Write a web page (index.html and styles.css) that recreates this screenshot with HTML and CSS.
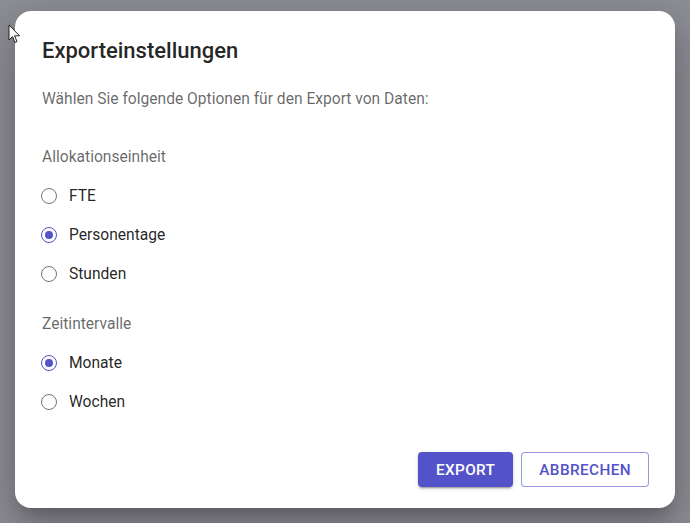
FILE: index.html
```html
<!DOCTYPE html>
<html lang="de">
<head>
  <meta charset="UTF-8">
  <meta name="viewport" content="width=device-width, initial-scale=1.0">
  <title>Exporteinstellungen</title>
  <link rel="stylesheet" href="styles.css">
</head>
<body>
  <div class="dialog">
    <h2 class="title">Exporteinstellungen</h2>
    <p class="intro">Wählen Sie folgende Optionen für den Export von Daten:</p>

    <div class="group">
      <div class="group-label">Allokationseinheit</div>
      <label class="option"><input type="radio" name="unit" value="fte"><span>FTE</span></label>
      <label class="option"><input type="radio" name="unit" value="pt" checked><span>Personentage</span></label>
      <label class="option"><input type="radio" name="unit" value="h"><span>Stunden</span></label>
    </div>

    <div class="group">
      <div class="group-label">Zeitintervalle</div>
      <label class="option"><input type="radio" name="interval" value="m" checked><span>Monate</span></label>
      <label class="option"><input type="radio" name="interval" value="w"><span>Wochen</span></label>
    </div>

    <div class="actions">
      <button class="btn btn-primary">Export</button>
      <button class="btn btn-outline">Abbrechen</button>
    </div>
  </div>

  <svg class="cursor" width="13" height="20" viewBox="0 0 13 20">
    <path d="M1 1 L1 16 L4.5 12.5 L7 18.5 L9 17.6 L6.6 11.8 L11.5 11.8 Z" fill="#fff" stroke="#222" stroke-width="1"/>
  </svg>
</body>
</html>
```

FILE: styles.css
```css
body {
  margin: 0;
  height: 523px;
  overflow: hidden;
  background: #8e8e96;
  font-family: Roboto, "Noto Sans", sans-serif;
  position: relative;
}

.dialog {
  box-sizing: border-box;
  width: 660px;
  height: 497px;
  margin: 11px 0 0 15px;
  padding: 24px 26px 21px 27px;
  background: #fff;
  border-radius: 16px;
  box-shadow: 0 11px 15px -7px rgba(0,0,0,0.2), 0 24px 38px 3px rgba(0,0,0,0.14), 0 9px 46px 8px rgba(0,0,0,0.12);
  display: flex;
  flex-direction: column;
}

.title {
  margin: 0;
  font-size: 22px;
  font-weight: 500;
  line-height: 32px;
  color: rgba(0,0,0,0.87);
}

.intro {
  margin: 20px 0 0;
  font-size: 15.6px;
  line-height: 24px;
  color: rgba(0,0,0,0.6);
}

.group {
  margin-top: 34px;
  display: flex;
  flex-direction: column;
}

.group + .group {
  margin-top: 19px;
}

.group-label {
  font-size: 15.6px;
  line-height: 24px;
  color: rgba(0,0,0,0.6);
  margin-bottom: 7px;
}

.option {
  display: flex;
  align-items: center;
  height: 39px;
  font-size: 15.6px;
  color: rgba(0,0,0,0.87);
  cursor: pointer;
}

.option input {
  appearance: none;
  margin: 0 12px 0 -1px;
  width: 16px;
  height: 16px;
  border: 1.8px solid #757575;
  border-radius: 50%;
  box-sizing: border-box;
  display: grid;
  place-items: center;
}

.option input:checked {
  border-color: #5352c9;
}

.option input:checked::after {
  content: "";
  width: 8px;
  height: 8px;
  border-radius: 50%;
  background: #5352c9;
}

.actions {
  margin-top: auto;
  display: flex;
  justify-content: flex-end;
  gap: 8px;
}

.btn {
  height: 35px;
  padding: 0 18px;
  font-family: Roboto, sans-serif;
  font-size: 15.3px;
  font-weight: 500;
  letter-spacing: 0.4px;
  text-transform: uppercase;
  border-radius: 4px;
  cursor: pointer;
}

.btn-primary {
  background: #5352c9;
  color: #fff;
  border: none;
  box-shadow: 0 3px 1px -2px rgba(0,0,0,0.2), 0 2px 2px 0 rgba(0,0,0,0.14), 0 1px 5px 0 rgba(0,0,0,0.12);
}

.btn-outline {
  padding: 0 17px;
  background: #fff;
  color: #5352c9;
  border: 1px solid rgba(83,82,201,0.6);
}

.cursor {
  position: absolute;
  left: 8px;
  top: 24px;
}
```
